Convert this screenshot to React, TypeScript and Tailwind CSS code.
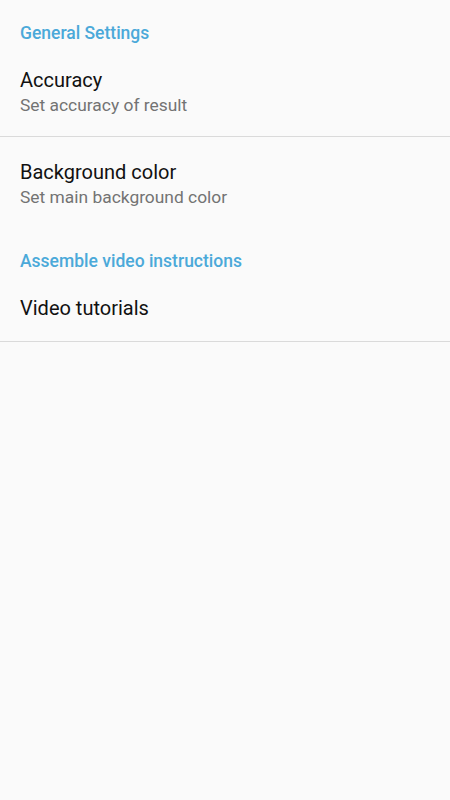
const Header = ({ title, className }: { title: string; className: string }) => (
  <div className={`px-5 text-[17.5px] leading-6 font-medium text-[#4ba9d9] ${className}`}>
    {title}
  </div>
);

const Item = ({
  title,
  summary,
  className,
}: {
  title: string;
  summary?: string;
  className: string;
}) => (
  <div className={`px-5 ${className}`}>
    <div className="text-[20px] leading-[25px] text-[#111111]">{title}</div>
    {summary && <div className="text-[17.4px] leading-6 text-[#737373]">{summary}</div>}
  </div>
);

export default function App() {
  return (
    <div
      className="min-h-[800px] w-[450px] bg-[#fafafa]"
      style={{ fontFamily: "Roboto, 'Noto Sans', sans-serif" }}
    >
      <Header title="General Settings" className="pt-[21px]" />
      <Item
        title="Accuracy"
        summary="Set accuracy of result"
        className="pt-[23px] pb-[19px] border-b border-[#dadada]"
      />
      <Item
        title="Background color"
        summary="Set main background color"
        className="pt-[23px]"
      />
      <Header title="Assemble video instructions" className="pt-10" />
      <Item
        title="Video tutorials"
        className="pt-[23px] pb-5 border-b border-[#dadada]"
      />
    </div>
  );
}
